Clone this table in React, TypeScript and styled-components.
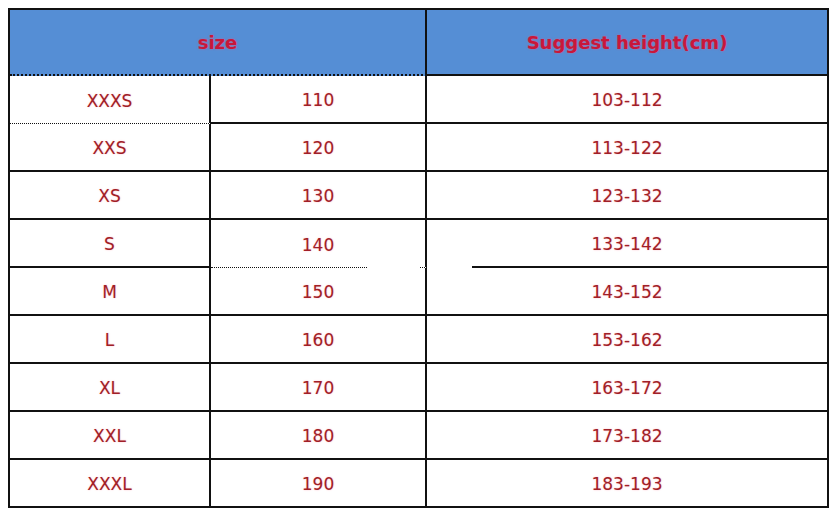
import React from "react";
import styled, { createGlobalStyle } from "styled-components";

const GlobalStyle = createGlobalStyle`
  body {
    margin: 0;
    background: #fff;
    font-family: "DejaVu Sans", "Liberation Sans", sans-serif;
  }
`;

const Page = styled.div`
  width: 833px;
  height: 516px;
  padding: 8px 0 0 8px;
  box-sizing: border-box;
`;

const Table = styled.div`
  width: 821px;
  display: grid;
  grid-template-columns: 201px 216px 1fr;
  grid-template-rows: 66px repeat(8, 48px) 46px;
  border: 2px solid #111;
  box-sizing: border-box;
`;

const HeadCell = styled.div<{ $span?: number; $dotted?: boolean }>`
  grid-column: span ${(p) => p.$span ?? 1};
  background: #558ed5;
  display: flex;
  align-items: center;
  justify-content: center;
  font-weight: bold;
  font-size: 18px;
  color: #c8173a;
  text-shadow: 0 0 2px rgba(255, 80, 120, 0.7);
  border-bottom: 2px ${(p) => (p.$dotted ? "dotted" : "solid")} #111;
  border-right: ${(p) => (p.$span ? "2px solid #111" : "none")};
  box-sizing: border-box;
`;

const Cell = styled.div<{ $line?: "solid" | "dotted" | "none"; $right?: boolean }>`
  position: relative;
  display: flex;
  align-items: center;
  justify-content: center;
  padding-top: 2px;
  font-size: 17px;
  color: #a01f28;
  text-shadow: 0 0 1.5px rgba(255, 120, 140, 0.6);
  border-bottom: ${(p) => (p.$line === "dotted" ? "1.5px" : "2px")} ${(p) => p.$line ?? "solid"} #111;
  border-right: ${(p) => (p.$right ? "2px solid #111" : "none")};
  box-sizing: border-box;
`;

const Gap = styled.span<{ $left: number; $width: number }>`
  position: absolute;
  bottom: -2px;
  left: ${(p) => p.$left}px;
  width: ${(p) => p.$width}px;
  height: 3px;
  background: #fff;
`;

const rows = [
  ["XXXS", "110", "103-112"],
  ["XXS", "120", "113-122"],
  ["XS", "130", "123-132"],
  ["S", "140", "133-142"],
  ["M", "150", "143-152"],
  ["L", "160", "153-162"],
  ["XL", "170", "163-172"],
  ["XXL", "180", "173-182"],
  ["XXXL", "190", "183-193"],
];

export default function App() {
  return (
    <>
      <GlobalStyle />
      <Page>
        <Table>
          <HeadCell $span={2} $dotted>
            size
          </HeadCell>
          <HeadCell>Suggest height(cm)</HeadCell>
          {rows.map(([s, n, h], i) => {
            const last = i === rows.length - 1;
            const line = last ? "none" : "solid";
            return (
              <React.Fragment key={s}>
                <Cell $right $line={i === 0 ? "dotted" : line}>
                  {s}
                </Cell>
                <Cell $right $line={i === 3 ? "dotted" : line}>
                  {n}
                  {i === 3 && <Gap $left={157} $width={52} />}
                </Cell>
                <Cell $line={line}>
                  {h}
                  {i === 3 && <Gap $left={0} $width={45} />}
                </Cell>
              </React.Fragment>
            );
          })}
        </Table>
      </Page>
    </>
  );
}
